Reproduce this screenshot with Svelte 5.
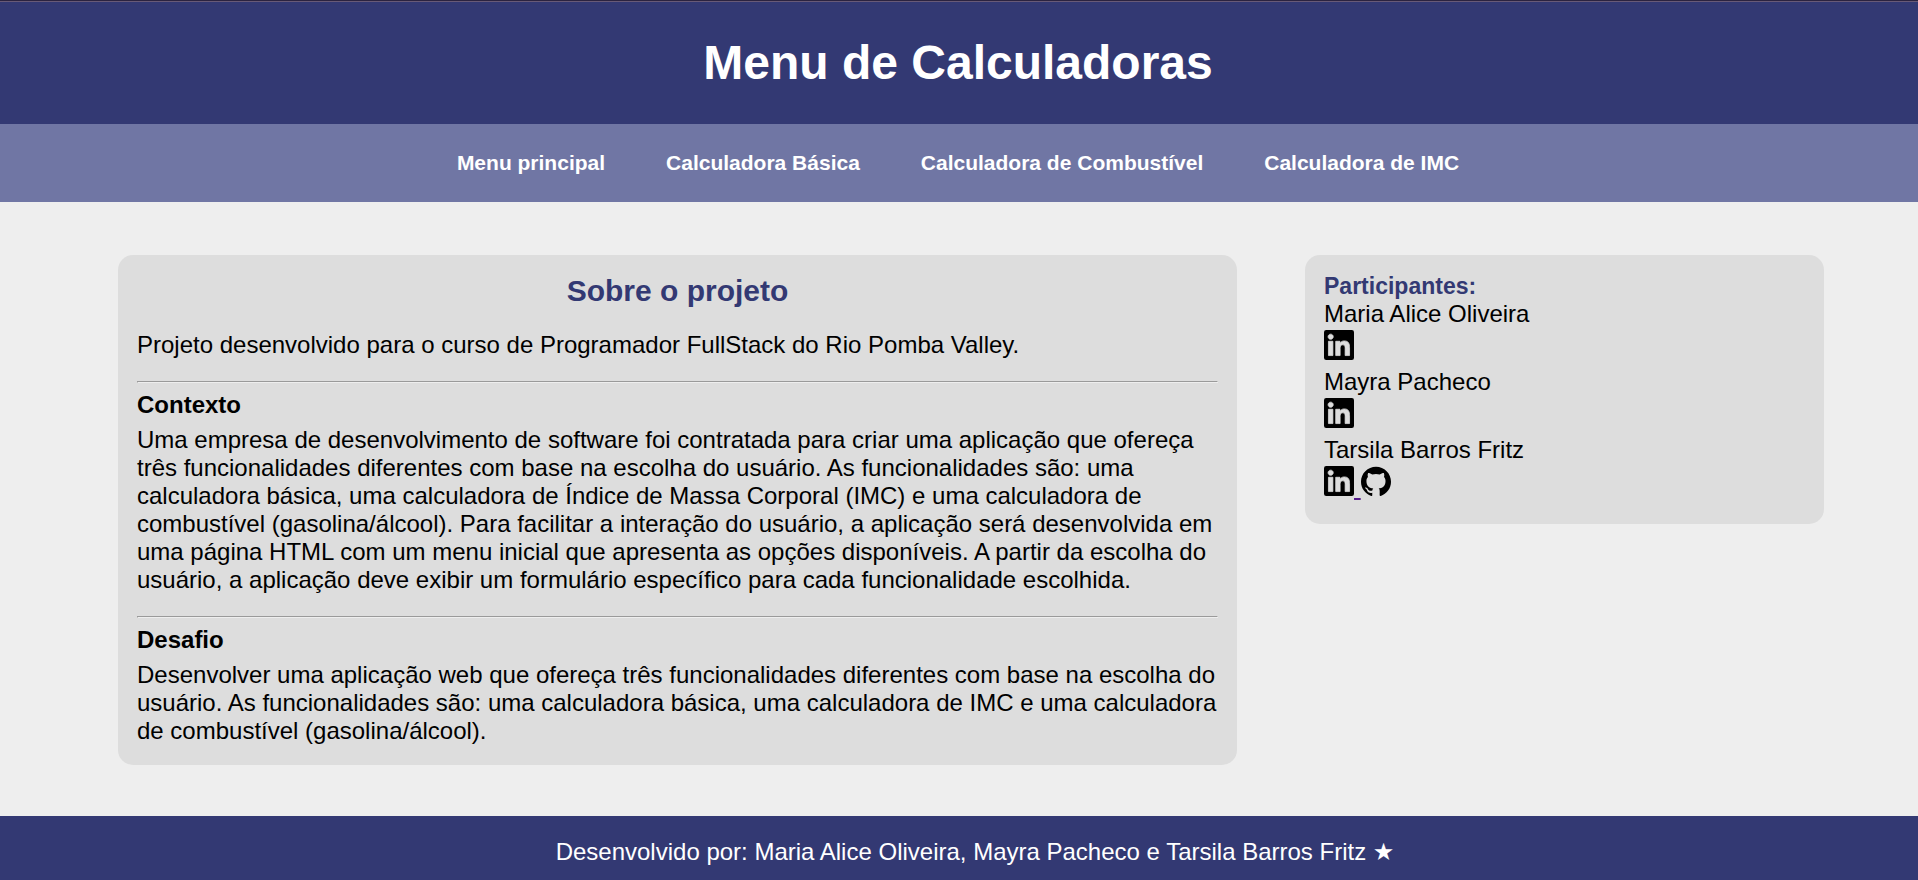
<script>
  const pages = ['Menu principal', 'Calculadora Básica', 'Calculadora de Combustível', 'Calculadora de IMC'];
  const people = [
    { name: 'Maria Alice Oliveira', github: false },
    { name: 'Mayra Pacheco', github: false },
    { name: 'Tarsila Barros Fritz', github: true }
  ];
</script>

<div class="page">
  <header>
    <h1>Menu de Calculadoras</h1>
  </header>

  <nav>
    {#each pages as page}
      <a href="#top">{page}</a>
    {/each}
  </nav>

  <main>
    <section class="card about">
      <h2>Sobre o projeto</h2>
      <p>Projeto desenvolvido para o curso de Programador FullStack do Rio Pomba Valley.</p>
      <hr />
      <h3>Contexto</h3>
      <p>
        Uma empresa de desenvolvimento de software foi contratada para criar uma aplicação que ofereça três
        funcionalidades diferentes com base na escolha do usuário. As funcionalidades são: uma calculadora básica, uma
        calculadora de Índice de Massa Corporal (IMC) e uma calculadora de combustível (gasolina/álcool). Para
        facilitar a interação do usuário, a aplicação será desenvolvida em uma página HTML com um menu inicial que
        apresenta as opções disponíveis. A partir da escolha do usuário, a aplicação deve exibir um formulário
        específico para cada funcionalidade escolhida.
      </p>
      <hr />
      <h3>Desafio</h3>
      <p>
        Desenvolver uma aplicação web que ofereça três funcionalidades diferentes com base na escolha do usuário. As
        funcionalidades são: uma calculadora básica, uma calculadora de IMC e uma calculadora de combustível
        (gasolina/álcool).
      </p>
    </section>

    <aside class="card">
      <h4>Participantes:</h4>
      {#each people as person}
        <div>{person.name}</div>
        <div class="links">
          <a href="#linkedin" aria-label="LinkedIn"><svg viewBox="0 0 24 24"><rect width="24" height="24" rx="1.75" /><path class="mark" d="M20.447 20.452h-3.554v-5.569c0-1.328-.027-3.037-1.852-3.037-1.853 0-2.136 1.445-2.136 2.939v5.667H9.351V9h3.414v1.561h.046c.477-.9 1.637-1.85 3.37-1.85 3.601 0 4.267 2.37 4.267 5.455v6.286zM5.337 7.433c-1.144 0-2.063-.926-2.063-2.065 0-1.138.92-2.063 2.063-2.063 1.14 0 2.064.925 2.064 2.063 0 1.139-.925 2.065-2.064 2.065zm1.782 13.019H3.555V9h3.564v11.452z" /></svg>{#if person.github}{' '}{/if}</a>{#if person.github}<a href="#github" aria-label="GitHub"><svg viewBox="0 0 24 24"><path d="M12 .6C5.37.6 0 5.97 0 12.6c0 5.3 3.438 9.8 8.205 11.385.6.113.82-.258.82-.577 0-.285-.01-1.04-.015-2.04-3.338.724-4.042-1.61-4.042-1.61C4.422 18.37 3.633 18 3.633 18c-1.087-.744.084-.729.084-.729 1.205.084 1.838 1.236 1.838 1.236 1.07 1.835 2.809 1.305 3.495.998.108-.776.417-1.305.76-1.605-2.665-.3-5.466-1.332-5.466-5.93 0-1.31.465-2.38 1.235-3.22-.135-.303-.54-1.523.105-3.176 0 0 1.005-.322 3.3 1.23.96-.267 1.98-.399 3-.405 1.02.006 2.04.138 3 .405 2.28-1.552 3.285-1.23 3.285-1.23.645 1.653.24 2.873.12 3.176.765.84 1.23 1.91 1.23 3.22 0 4.61-2.805 5.625-5.475 5.92.42.36.81 1.096.81 2.22 0 1.606-.015 2.896-.015 3.286 0 .315.21.69.825.57C20.565 22.392 24 17.892 24 12.6 24 5.97 18.627.6 12 .6" /></svg></a>{/if}
        </div>
      {/each}
    </aside>
  </main>

  <footer>Desenvolvido por: Maria Alice Oliveira, Mayra Pacheco e Tarsila Barros Fritz ★</footer>
</div>

<style>
  :global(body) {
    margin: 0;
    background: #eee;
  }
  .page {
    display: flex;
    flex-direction: column;
    min-height: 100vh;
    font: 24px/28px Arial, "Liberation Sans", "DejaVu Sans", sans-serif;
    color: #000;
  }
  h1, h2, h3, h4, p {
    margin: 0;
  }
  header {
    position: relative;
    padding: 34px 2px 34px 0;
    border-top: 2px solid #685a77;
    background: #333973;
    color: #fff;
    text-align: center;
  }
  header::before {
    content: "";
    position: absolute;
    inset: -2px 0 auto;
    height: 1px;
    background: #2b2340;
  }
  h1 {
    font-size: 48px;
    line-height: 54px;
  }
  nav {
    display: flex;
    justify-content: center;
    gap: 61px;
    padding: 25px 2px 25px 0;
    background: #7076a4;
    font-size: 21px;
    font-weight: bold;
  }
  nav a {
    color: #fff;
    text-decoration: none;
  }
  main {
    flex: 1;
    display: grid;
    grid-template-columns: 69fr 32fr;
    align-items: start;
    column-gap: 68px;
    padding: 53px 94px 51px 118px;
  }
  .card {
    border-radius: 15px;
    background: #ddd;
  }
  .about {
    padding: 19px 19px 20px;
  }
  h2 {
    margin-bottom: 23px;
    color: #333973;
    font-size: 30px;
    line-height: 34px;
    text-align: center;
  }
  hr {
    margin: 22px 0 8px;
    border: 1px solid;
    border-color: #9a9a9a #eee #eee #9a9a9a;
  }
  h3 {
    margin-bottom: 7px;
    font-size: 24px;
  }
  p + hr {
    margin-top: 22px;
  }
  aside {
    padding: 17px 19px 20px;
  }
  h4 {
    color: #333973;
    font-size: 23px;
  }
  .links {
    padding: 2px 0;
  }
  .links a {
    color: #551a8b;
  }
  svg {
    width: 30px;
    height: 30px;
    fill: #000;
  }
  .mark {
    fill: #ddd;
    stroke: #ddd;
    stroke-width: 0.6;
  }
  footer {
    padding: 22px 0 14px 32px;
    background: #333973;
    color: #fff;
    text-align: center;
  }
</style>
